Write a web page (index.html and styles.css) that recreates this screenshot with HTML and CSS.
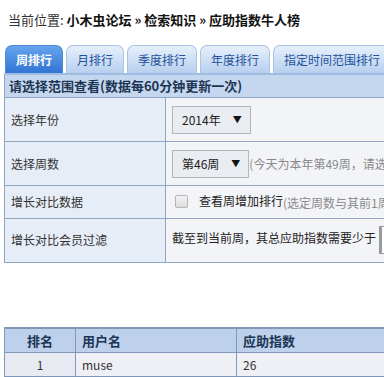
FILE: index.html
```html
<!DOCTYPE html>
<html lang="zh">
<head>
<meta charset="utf-8">
<link rel="stylesheet" href="styles.css">
</head>
<body>
<div class="crumb">当前位置: <b>小木虫论坛 » 检索知识 » 应助指数牛人榜</b></div>
<div class="tabs">
  <span class="tab active">周排行</span>
  <span class="tab">月排行</span>
  <span class="tab">季度排行</span>
  <span class="tab">年度排行</span>
  <span class="tab">指定时间范围排行</span>
</div>
<table class="filter">
  <tr><th colspan="2">请选择范围查看(数据每60分钟更新一次)</th></tr>
  <tr class="tall">
    <td class="label">选择年份</td>
    <td class="val"><span class="sel">2014年<i class="arr">▼</i></span></td>
  </tr>
  <tr class="tall">
    <td class="label">选择周数</td>
    <td class="val"><span class="sel">第46周<i class="arr">▼</i></span><span class="note">(今天为本年第49周，请选择要查看的周数)</span></td>
  </tr>
  <tr>
    <td class="label">增长对比数据</td>
    <td class="val"><span class="chk"></span>查看周增加排行<span class="note">(选定周数与其前1周的数据对比)</span></td>
  </tr>
  <tr class="tall">
    <td class="label">增长对比会员过滤</td>
    <td class="val">截至到当前周，其总应助指数需要少于 <span class="inp"></span></td>
  </tr>
</table>
<table class="rank">
  <tr><th class="c1">排名</th><th class="c2">用户名</th><th>应助指数</th></tr>
  <tr><td class="c1">1</td><td class="c2">muse</td><td>26</td></tr>
</table>
</body>
</html>
```
FILE: styles.css
```css
html, body { margin: 0; }
body {
  padding: 11px 4px 0 4px;
  font-family: "Noto Sans CJK SC", "Noto Sans", sans-serif;
  font-size: 12px;
  color: #333;
  background: #fff;
  overflow: hidden;
  width: 700px;
}
.crumb {
  font-size: 13px;
  line-height: 18px;
  padding-left: 4px;
  color: #333;
}
.crumb b { color: #111; }
.tabs {
  display: flex;
  gap: 3px;
  margin-top: 16px;
  padding-left: 1px;
  height: 28px;
}
.tab {
  display: flex;
  align-items: center;
  padding: 0 10px;
  font-size: 12px;
  color: #23509c;
  border-radius: 7px 7px 0 0;
  background: linear-gradient(#e6f0fb, #b7cfee);
  border: 1px solid #a9c3e6;
  border-bottom: none;
}
.tab.active {
  color: #fff;
  font-weight: bold;
  background: linear-gradient(#65a4ec, #3174d4);
  border-color: #4f8bd9;
}
table {
  border-collapse: collapse;
  width: 640px;
}
.filter th {
  background: #c5d7ef;
  border: 1px solid #8ea5c4;
  border-top: 2px solid #9fbde3;
  color: #1c3553;
  font-size: 13px;
  font-weight: bold;
  text-align: left;
  padding: 3px 4px;
  line-height: 16px;
}
.filter td {
  border: 1px solid #8ea5c4;
  padding: 7px 6px;
  line-height: 16px;
  white-space: nowrap;
}
.filter tr.tall td { height: 29px; }
.label {
  width: 148px;
  background: #e7edf6;
  color: #333;
}
.val {
  background: #f3f4f8;
  color: #222;
}
.sel {
  display: inline-flex;
  align-items: center;
  height: 26px;
  border: 1px solid #b4b8be;
  background: #e9ecf1;
  padding: 0 8px 0 9px;
  vertical-align: middle;
  color: #222;
}
.arr {
  font-style: normal;
  font-size: 9px;
  margin-left: 12px;
  color: #111;
}
.note { color: #8a8a8a; vertical-align: middle; }
.chk {
  display: inline-block;
  width: 11px;
  height: 11px;
  border: 1px solid #b5b5b5;
  border-radius: 2px;
  background: linear-gradient(#f4f4f4, #dcdcdc);
  vertical-align: middle;
  margin: 0 11px 2px 3px;
}
.inp {
  display: inline-block;
  width: 60px;
  height: 26px;
  border: 1px solid #a0a0a0;
  border-left: 3px solid #9a9a9a;
  background: #fff;
  vertical-align: middle;
}
.rank { margin-top: 64px; }
.rank th {
  background: #bdd1ed;
  border: 1px solid #7f97b8;
  border-top: 2px solid #7f97b8;
  font-size: 13px;
  color: #1c3553;
  text-align: left;
  padding: 3px 6px;
  line-height: 17px;
}
.rank td {
  background: #eef0f5;
  border: 1px solid #7f97b8;
  border-bottom: 2px solid #7f97b8;
  padding: 3px 6px;
  line-height: 17px;
  color: #333;
}
.rank .c1 { width: 58px; text-align: center; }
.rank td.c1 { background: #e7eaf1; }
.rank .c2 { width: 148px; }
```
